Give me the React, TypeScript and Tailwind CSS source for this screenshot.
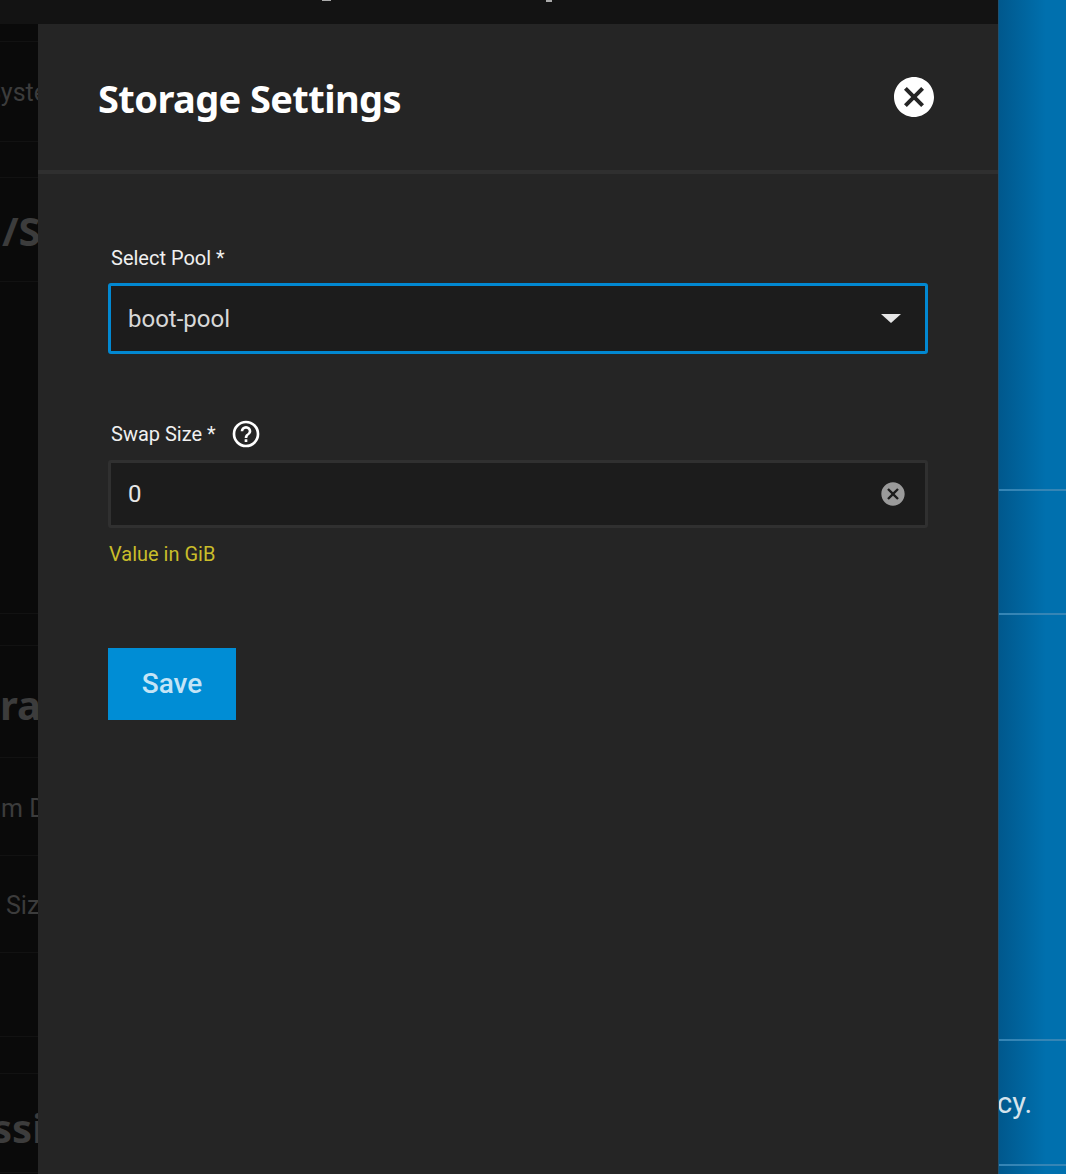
const sans = "font-['Roboto',sans-serif]";

// rows of the page that sits dimmed behind the slide-in panel
const behindRows = [
  { h: 'h-[18px]' },
  { h: 'h-[100px]', text: 'System', cls: "ml-[-14px] text-[25px] font-['Roboto',sans-serif] pt-[38px]" },
  { h: 'h-[36px]' },
  { h: 'h-[104px]', text: '/S', cls: "ml-[2px] text-[40px] font-bold font-['Noto_Sans',sans-serif] pt-[33px]" },
  { h: 'h-[332px]' },
  { h: 'h-[32px]' },
  { h: 'h-[112px]', text: 'ra', cls: "ml-[0px] text-[40px] font-bold font-['Noto_Sans',sans-serif] pt-[39px]" },
  { h: 'h-[98px]', text: 'im D', cls: "ml-[-5px] text-[25px] font-['Roboto',sans-serif] pt-[38px]" },
  { h: 'h-[97px]', text: 'Siz', cls: "ml-[6px] text-[25px] font-['Roboto',sans-serif] pt-[37px]" },
  { h: 'h-[84px]' },
  { h: 'h-[37px]' },
  { h: 'h-[99px]', text: 'ssic', cls: "ml-[-8px] text-[40px] font-bold font-['Noto_Sans',sans-serif] pt-[34px]" },
];

function CloseCircle({ className }: { className: string }) {
  return (
    <svg viewBox="0 0 24 24" className={className} fill="currentColor">
      <path d="M12,2C17.53,2 22,6.47 22,12C22,17.53 17.53,22 12,22C6.47,22 2,17.53 2,12C2,6.47 6.47,2 12,2M15.59,7L12,10.59L8.41,7L7,8.41L10.59,12L7,15.59L8.41,17L12,13.41L15.59,17L17,15.59L13.41,12L17,8.41L15.59,7Z" />
    </svg>
  );
}

function HelpCircle({ className }: { className: string }) {
  return (
    <svg viewBox="0 0 24 24" className={className} fill="currentColor">
      <path d="M11,18H13V16H11V18M12,2A10,10 0 0,0 2,12A10,10 0 0,0 12,22A10,10 0 0,0 22,12A10,10 0 0,0 12,2M12,20C7.59,20 4,16.41 4,12C4,7.59 7.59,4 12,4C16.41,4 20,7.59 20,12C20,16.41 16.41,20 12,20M12,6A4,4 0 0,0 8,10H10A2,2 0 0,1 12,8A2,2 0 0,1 14,10C14,12 11,11.75 11,15H13C13,12.75 16,12.5 16,10A4,4 0 0,0 12,6Z" />
    </svg>
  );
}

export default function App() {
  return (
    <div className={`flex h-[1174px] w-[1066px] overflow-hidden bg-[#0a0a0a] ${sans}`}>
      <div className="flex w-[998px] flex-col">
        {/* top bar, only the feet of its text are in view */}
        <div className="flex h-[24px] items-start bg-[#131313] pl-[322px]">
          <span className="h-[1px] w-[9px] bg-[#aaaaaa]" />
          <span className="ml-[215px] h-[2px] w-[6px] bg-[#aaaaaa]" />
        </div>

        <div className="flex flex-1">
          <div className="w-[38px] overflow-hidden bg-[#0a0a0a]">
            {behindRows.map((row, idx) => (
              <div key={idx} className={`${row.h} overflow-hidden border-b border-[#121212]`}>
                {row.text && (
                  <div className={`whitespace-nowrap leading-none text-[#3c3c3c] ${row.cls}`}>{row.text}</div>
                )}
              </div>
            ))}
          </div>

          <div className="flex-1 bg-[#252525]">
            <div className="flex h-[150px] items-start justify-between border-b-4 border-[#2f2f2f] pl-[60px] pr-[60px]">
              <h1 className="mt-[45px] text-[38px] font-bold leading-[58px] tracking-[-0.6px] text-white font-['Noto_Sans',sans-serif]">
                Storage Settings
              </h1>
              <CloseCircle className="mt-[49px] h-[48px] w-[48px] text-white" />
            </div>

            <div className="pl-[70px] pr-[70px] pt-[71px]">
              <div className="pl-[3px] text-[20px] leading-[26px] text-[#f0f0f0]">Select Pool *</div>
              <div className="mt-[12px] flex h-[71px] items-center justify-between rounded-[3px] border-[3px] border-[#0288d1] bg-[#1c1c1c] pl-[17px] pr-[24px] text-[24px] text-[#d8d8d8]">
                <span>boot-pool</span>
                <svg viewBox="0 0 20 9" className="h-[9px] w-[20px]" fill="#e6e6e6">
                  <path d="M0 0H20L10 9Z" />
                </svg>
              </div>

              <div className="mt-[64px] flex h-[32px] items-center pl-[3px] text-[#f0f0f0]">
                <span className="text-[20px] leading-[26px]">Swap Size *</span>
                <HelpCircle className="ml-[14px] h-[32px] w-[32px] text-white" />
              </div>
              <div className="mt-[10px] flex h-[68px] items-center justify-between rounded-[3px] border-[3px] border-[#303030] bg-[#1c1c1c] pl-[17px] pr-[18px] text-[24px] text-[#e6e6e6]">
                <span>0</span>
                <CloseCircle className="h-[28px] w-[28px] text-[#9a9a9a]" />
              </div>
              <div className="mt-[13px] pl-[1px] text-[20px] leading-[26px] text-[#c9bd2a]">Value in GiB</div>

              <button className="mt-[81px] h-[72px] w-[128px] bg-[#008dd5] text-[28px] font-medium text-[#c4e4f6]">Save</button>
            </div>
          </div>
        </div>
      </div>

      {/* blue page to the right of the panel */}
      <div className="flex-1 overflow-hidden border-l border-[#1f4f6e] bg-gradient-to-r from-[#00588d] to-[#0070ae] to-[70%]">
        <div className="h-[491px] border-b-2 border-[#3585b5]" />
        <div className="h-[124px] border-b-2 border-[#3585b5]" />
        <div className="h-[426px] border-b-2 border-[#3585b5]" />
        <div className="ml-[-2px] h-[125px] border-b-2 border-[#3585b5] pt-[42px] text-[29px] leading-[40px] text-[#d5e3ec] font-['Roboto',sans-serif]">
          cy.
        </div>
      </div>
    </div>
  );
}
